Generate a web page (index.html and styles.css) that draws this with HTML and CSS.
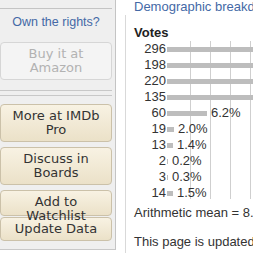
FILE: index.html
```html
<!DOCTYPE html>
<html lang="en">
<head>
  <meta charset="UTF-8">
  <meta name="viewport" content="width=device-width, initial-scale=1.0">
  <title>User Ratings</title>
  <link rel="stylesheet" href="styles.css">
</head>
<body>
  <div class="page">
    <aside class="sidebar">
      <div class="side-top"></div>

      <div class="side-box">
        <a class="rights" href="#">Own the rights?</a>
        <a class="btn btn-off" href="#">Buy it at Amazon</a>
      </div>

      <div class="side-box side-actions">
        <a class="btn" href="#">More at IMDb Pro</a>
        <a class="btn" href="#">Discuss in Boards</a>
        <a class="btn btn-short" href="#">Add to Watchlist</a>
        <a class="btn" href="#">Update Data</a>
      </div>
    </aside>

    <main class="main">
      <h2 class="title"><a href="#">Demographic breakdowns</a></h2>

      <div class="chart-box">
        <div class="votes-head">Votes</div>

        <div class="votes">
          <div class="row"><span class="num">296</span><span class="bar" style="width: 199px"></span><span class="pct">30.8%</span></div>
          <div class="row"><span class="num">198</span><span class="bar" style="width: 133px"></span><span class="pct">20.6%</span></div>
          <div class="row"><span class="num">220</span><span class="bar" style="width: 148px"></span><span class="pct">22.9%</span></div>
          <div class="row"><span class="num">135</span><span class="bar" style="width: 91px"></span><span class="pct">14.1%</span></div>
          <div class="row"><span class="num">60</span><span class="bar" style="width: 40px"></span><span class="pct">6.2%</span></div>
          <div class="row"><span class="num">19</span><span class="bar" style="width: 7px"></span><span class="pct">2.0%</span></div>
          <div class="row"><span class="num">13</span><span class="bar" style="width: 6px"></span><span class="pct">1.4%</span></div>
          <div class="row"><span class="num">2</span><span class="bar" style="width: 1px"></span><span class="pct">0.2%</span></div>
          <div class="row"><span class="num">3</span><span class="bar" style="width: 1px"></span><span class="pct">0.3%</span></div>
          <div class="row"><span class="num">14</span><span class="bar" style="width: 6px"></span><span class="pct">1.5%</span></div>
        </div>

        <p class="mean">Arithmetic mean = 8.3. Median = 9</p>
        <p class="note">This page is updated daily.</p>
      </div>
    </main>
  </div>
</body>
</html>
```

FILE: styles.css
```css
* {
  margin: 0;
  padding: 0;
  box-sizing: border-box;
}

html, body {
  overflow: hidden;
}

body {
  background: #fff;
  color: #333;
  font-family: 'Liberation Sans', Arial, sans-serif;
  font-size: 13px;
}

a {
  text-decoration: none;
}

.page {
  display: flex;
  align-items: flex-start;
  width: 400px;
}

/* left column */
.sidebar {
  width: 116px;
  flex-shrink: 0;
  padding-right: 3px;
  background: #efefef;
  border-right: 1px solid #c4c4c4;
  border-bottom: 1px solid #c8c8c8;
  padding-bottom: 8px;
}

.side-top {
  height: 9px;
  border-bottom: 1px solid #c4c4c4;
}

.side-box {
  padding: 6px 0 10px;
  border-bottom: 1px solid #c8c8c8;
}

.side-actions {
  margin-top: 4px;
  padding: 8px 0 0;
  border-top: 1px solid #c8c8c8;
  border-bottom: none;
}

.rights {
  display: block;
  margin-bottom: 12px;
  font-size: 12.5px;
  line-height: 15px;
  text-align: center;
  color: #4469a6;
}

.btn {
  display: block;
  padding: 4px 2px;
  margin-bottom: 5px;
  border: 1px solid #cbc1a9;
  border-radius: 4px;
  background: linear-gradient(#f8f2e3, #ebe1c8);
  color: #333;
  font-family: 'DejaVu Sans', Verdana, sans-serif;
  font-size: 13px;
  line-height: 14px;
  text-align: center;
}

.btn:last-child {
  margin-bottom: 0;
}

.btn-off {
  margin-bottom: 0;
  border-color: #d6d6d6;
  background: #f4f4f4;
  color: #b2b2b2;
}

.btn-short {
  height: 26px;
  margin-bottom: 1px;
}

/* right column */
.main {
  flex: 1;
  margin-left: 9px;
}

.title {
  margin: 0 0 2px 9px;
  font-size: 13px;
  font-weight: normal;
  line-height: 13px;
  white-space: nowrap;
}

.title a {
  color: #4469a6;
}

.chart-box {
  min-height: 240px;
  padding: 10px 0 0 8px;
  border-left: 1px solid #d9d9d9;
}

.votes-head {
  font-weight: bold;
  line-height: 16px;
  color: #222;
}

.votes {
  background:
    linear-gradient(#cfcfcf, #cfcfcf) 56px 0 / 1px 158px no-repeat,
    linear-gradient(#cfcfcf, #cfcfcf) 76px 0 / 1px 158px no-repeat,
    linear-gradient(#cfcfcf, #cfcfcf) 96px 0 / 1px 158px no-repeat,
    linear-gradient(#cfcfcf, #cfcfcf) 116px 0 / 1px 158px no-repeat;
}

.row {
  display: flex;
  align-items: flex-start;
  height: 16px;
  line-height: 16px;
  white-space: nowrap;
}

.num {
  width: 32px;
  flex-shrink: 0;
  text-align: right;
}

.bar {
  flex-shrink: 0;
  height: 5px;
  margin: 6px 0 0 1px;
  background: #bdbdbd;
}

.pct {
  margin-left: 4px;
}

.mean {
  margin-top: 4px;
  line-height: 16px;
  white-space: nowrap;
}

.note {
  margin-top: 13px;
  line-height: 16px;
  white-space: nowrap;
}
```
